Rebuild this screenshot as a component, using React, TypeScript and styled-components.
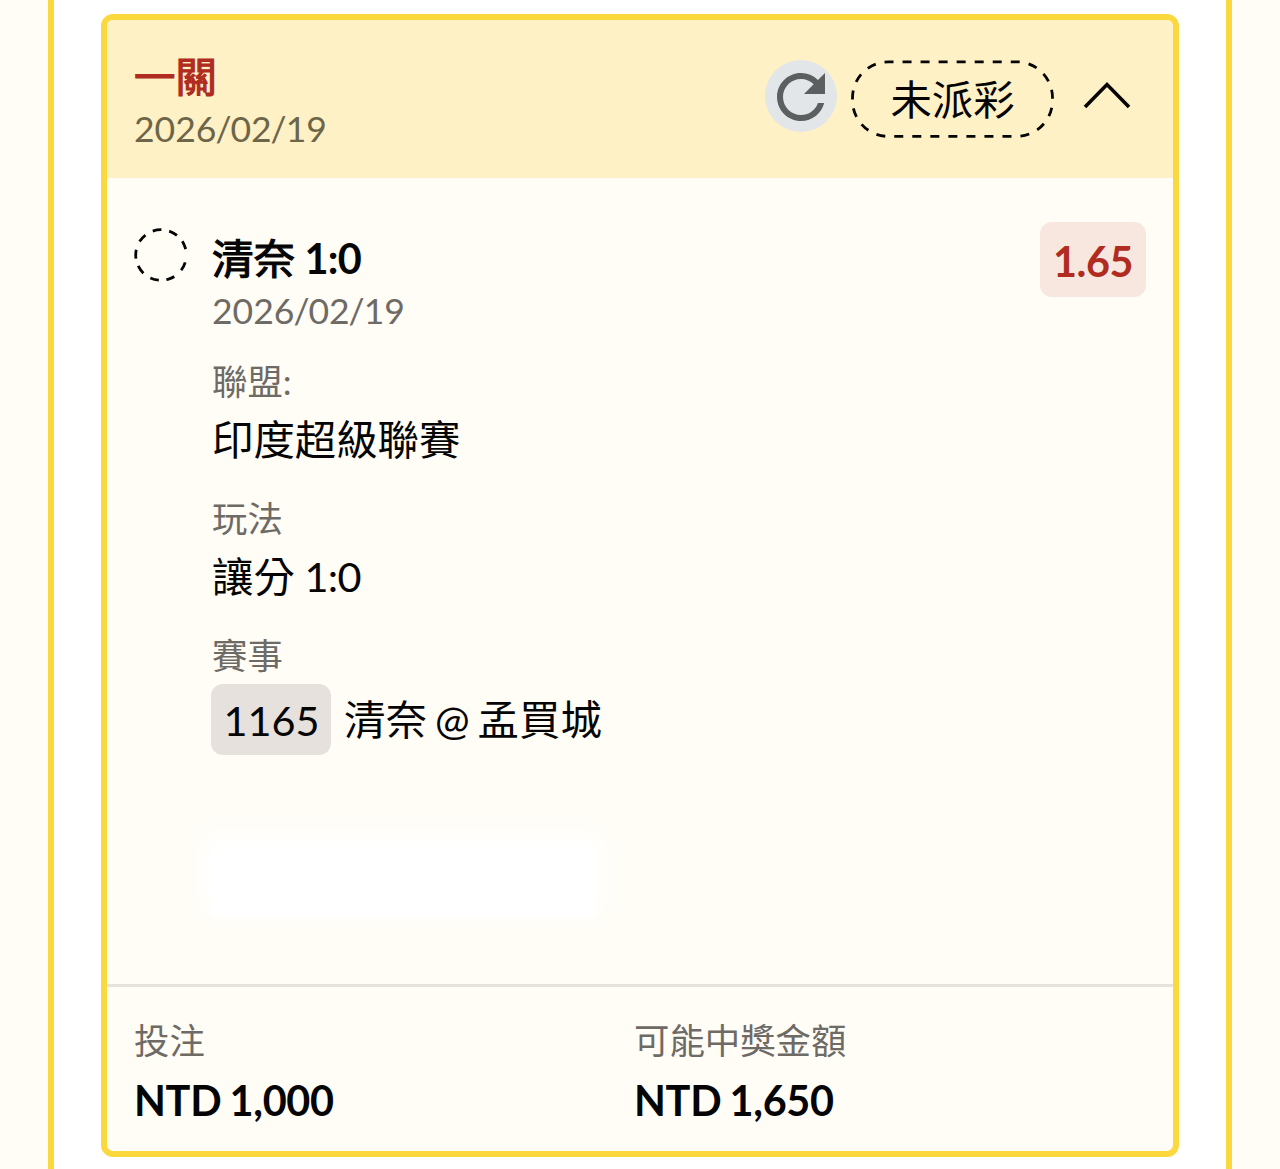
import React, { FC } from 'react';
import styled, { createGlobalStyle } from 'styled-components';
import { MdRefresh } from 'react-icons/md';

const GlobalStyle = createGlobalStyle`
  * {
    box-sizing: border-box;
  }
  body {
    margin: 0;
    background: #fffdf5;
    color: #050505;
    font-family: Lato, "Noto Sans CJK TC", sans-serif;
    font-size: 41.4px;
    word-spacing: -2.5px;
    overflow: hidden;
  }
`;

const Panel = styled.main`
  width: 1184px;
  height: 1169px;
  margin-left: 48px;
  padding: 14px 47px 0;
  background: #fff;
  border: solid #fad83e;
  border-width: 0 6px;
`;

const Card = styled.section`
  display: flex;
  flex-direction: column;
  height: 1143px;
  border: 6px solid #fad83e;
  border-radius: 12px;
  background: #fffdf6;
  overflow: hidden;
`;

const CardHeader = styled.header`
  display: flex;
  justify-content: space-between;
  height: 158px;
  padding: 29px 42px 0 27px;
  background: #fff1c6;
`;

// Chinese titles sit between regular and bold, so the regular cut gets a thin stroke
const Title = styled.h2<{ $red?: boolean }>`
  margin: 0;
  font-size: 41.4px;
  font-weight: 400;
  line-height: 54px;
  color: ${({ $red }) => ($red ? '#b02c20' : 'inherit')};
  -webkit-text-stroke: 1.2px;
`;

const Score = styled.span<{ $bold?: boolean }>`
  margin-left: 1.5px;
  letter-spacing: -0.6px;
  font-weight: ${({ $bold }) => ($bold ? 700 : 400)};
  -webkit-text-stroke: 0;
`;

const DateText = styled.div<{ $onYellow?: boolean }>`
  font-size: 35.5px;
  line-height: 52px;
  color: ${({ $onYellow }) => ($onYellow ? '#6d6549' : '#6e6a65')};
`;

const Slash = styled.span`
  margin: 0 -1px;
`;

const Actions = styled.div`
  display: flex;
  align-items: flex-start;
  padding-top: 11px;
`;

const RefreshButton = styled.button`
  display: flex;
  align-items: center;
  justify-content: center;
  width: 72px;
  height: 72px;
  margin-right: 14px;
  padding: 1px 0 0;
  border: 0;
  border-radius: 50%;
  background: #e3e6e8;
  color: #5c5f60;

  svg {
    flex: none;
  }
`;

const StatusPill = styled.div`
  position: relative;
  width: 203px;
  height: 78px;
  margin-right: 29px;
  line-height: 78px;
  text-align: center;

  svg {
    position: absolute;
    inset: 0;
  }
`;

const Chevron = styled.svg`
  margin-top: 20px;
`;

const Body = styled.div`
  display: flex;
  align-items: flex-start;
  height: 806px;
  padding: 44px 27px 0 26px;
`;

const Ring = styled.svg`
  flex: none;
  margin: 5px 23px 0 0;
`;

const Details = styled.div`
  flex: 1;
  padding-top: 9px;
`;

const Group = styled.div`
  padding-top: 18px;
  height: 137px;
`;

const Label = styled.div`
  font-size: 35.4px;
  line-height: 54px;
  color: #6e6a65;
`;

const Value = styled.div`
  line-height: 60px;
`;

const Amount = styled.div`
  font-weight: 700;
  letter-spacing: -0.3px;
  word-spacing: -1.5px;
  line-height: 64px;
`;

const Match = styled.div`
  display: flex;
  align-items: center;
  margin: 1px 0 0 -1px;
  line-height: 69px;
`;

const Tag = styled.span`
  width: 120px;
  height: 71px;
  margin-right: 13px;
  padding-left: 1px;
  border-radius: 12px;
  background: #e6e1dc;
  line-height: 73px;
  text-align: center;
`;

const Blank = styled.div`
  width: 384px;
  height: 66px;
  margin: 102px 0 0 -1px;
  background: #fff;
  box-shadow: 0 -8px 24px 8px #fff;
`;

const Odds = styled.div`
  width: 106px;
  height: 75px;
  border-radius: 12px;
  background: #f7e7df;
  color: #b02c20;
  font-weight: 700;
  letter-spacing: -0.4px;
  line-height: 78px;
  text-align: center;
`;

const Footer = styled.footer`
  display: grid;
  grid-template-columns: 500px 1fr;
  flex: 1;
  padding: 27px 27px 0;
  border-top: 3px solid #e6e3dd;
`;

const amounts = [
  { label: '投注', value: 'NTD 1,000' },
  { label: '可能中獎金額', value: 'NTD 1,650' },
];

const GameDate: FC<{ onYellow?: boolean }> = ({ onYellow }) => (
  <DateText $onYellow={onYellow}>
    2026<Slash>/</Slash>02<Slash>/</Slash>19
  </DateText>
);

const App: FC = () => {
  return (
    <React.Fragment>
      <GlobalStyle />
      <Panel>
        <Card>
          <CardHeader>
            <div>
              <Title $red>一關</Title>
              <GameDate onYellow />
            </div>
            <Actions>
              <RefreshButton aria-label="refresh">
                <MdRefresh size={72} />
              </RefreshButton>
              <StatusPill>
                <svg width="203" height="78" fill="none">
                  <rect
                    x="1.5"
                    y="1.8"
                    width="200"
                    height="74.6"
                    rx="36"
                    stroke="#050505"
                    strokeWidth="2.8"
                    pathLength="486"
                    strokeDasharray="9 9"
                    strokeDashoffset="4"
                  />
                </svg>
                未派彩
              </StatusPill>
              <Chevron width="48" height="30" fill="none" stroke="#050505" strokeWidth="3.6">
                <path d="M2 27L24 4.5L46 27" />
              </Chevron>
            </Actions>
          </CardHeader>

          <Body>
            <Ring width="56" height="56" fill="none">
              <circle
                cx="28"
                cy="28"
                r="25.3"
                stroke="#050505"
                strokeWidth="2.8"
                pathLength="360"
                strokeDasharray="20 18 20 18 20 30 20 21 20 17 20 19 20 18 20 20 20 19"
                transform="rotate(-109 28 28)"
              />
            </Ring>
            <Details>
              <Title>
                清奈 <Score $bold>1:0</Score>
              </Title>
              <GameDate />
              <Group>
                <Label>聯盟:</Label>
                <Value>印度超級聯賽</Value>
              </Group>
              <Group>
                <Label>玩法</Label>
                <Value>
                  讓分 <Score>1:0</Score>
                </Value>
              </Group>
              <Group>
                <Label>賽事</Label>
                <Match>
                  <Tag>1165</Tag>
                  清奈 @ 孟買城
                </Match>
              </Group>
              <Blank />
            </Details>
            <Odds>1.65</Odds>
          </Body>

          <Footer>
            {amounts.map((item) => (
              <div key={item.label}>
                <Label>{item.label}</Label>
                <Amount>{item.value}</Amount>
              </div>
            ))}
          </Footer>
        </Card>
      </Panel>
    </React.Fragment>
  );
};

export default App;
